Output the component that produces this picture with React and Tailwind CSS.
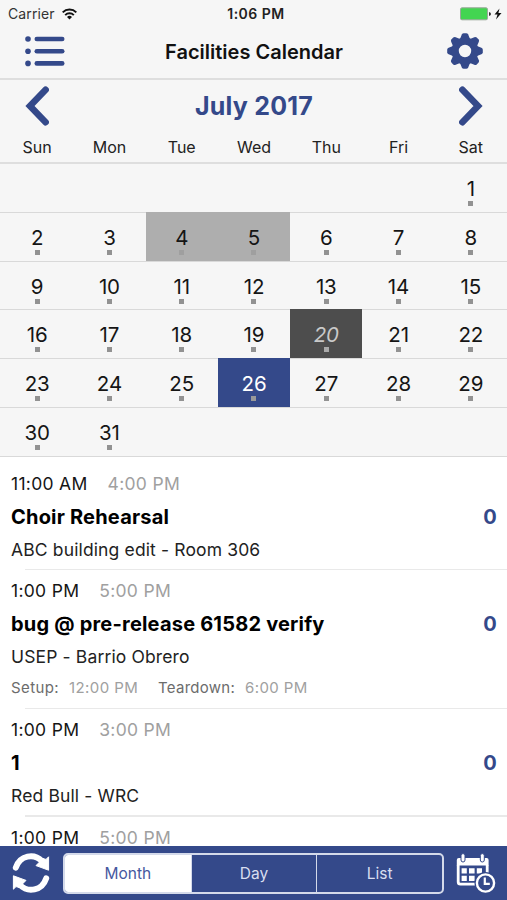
import React, { useState } from "react";

const weekdays = ["Sun", "Mon", "Tue", "Wed", "Thu", "Fri", "Sat"];

const weeks = [
  [null, null, null, null, null, null, 1],
  [2, 3, 4, 5, 6, 7, 8],
  [9, 10, 11, 12, 13, 14, 15],
  [16, 17, 18, 19, 20, 21, 22],
  [23, 24, 25, 26, 27, 28, 29],
  [30, 31, null, null, null, null, null],
];

const events = [
  {
    start: "11:00 AM",
    end: "4:00 PM",
    title: "Choir Rehearsal",
    place: "ABC building edit - Room 306",
    count: 0,
  },
  {
    start: "1:00 PM",
    end: "5:00 PM",
    title: "bug @ pre-release 61582 verify",
    place: "USEP - Barrio Obrero",
    setup: "12:00 PM",
    teardown: "6:00 PM",
    count: 0,
  },
  {
    start: "1:00 PM",
    end: "3:00 PM",
    title: "1",
    place: "Red Bull - WRC",
    count: 0,
  },
  {
    start: "1:00 PM",
    end: "5:00 PM",
  },
];

const StatusBar = () => (
  <div className="grid h-[27px] grid-cols-3 items-center pl-2 pr-[5px]">
    <div className="flex items-center gap-[7px]">
      <span className="text-[14px] tracking-[0.1px] text-[#333]">Carrier</span>
      <svg width="15" height="12" viewBox="0 0 15 12" fill="none" stroke="#111" strokeWidth="2">
        <path d="M0.7 4.4a9.7 9.7 0 0 1 13.6 0" />
        <path d="M3.2 7.1a6.1 6.1 0 0 1 8.6 0" />
        <path d="M7.5 11.5L5 9a3.6 3.6 0 0 1 5 0z" fill="#111" stroke="none" />
      </svg>
    </div>
    <span className="pl-[2px] text-center text-[14px] font-semibold tracking-[0.5px] text-[#222]">1:06 PM</span>
    <div className="flex items-center justify-end">
      <svg width="43" height="14" viewBox="0 0 43 14">
        <rect x="1.5" y="0.8" width="27" height="12" rx="1.5" fill="#43d551" stroke="#9aa79b" />
        <path d="M30 5v4q2-0.5 2-2t-2-2z" fill="#333" />
        <path d="M40.5 1.5L35.5 7.6h3l-1.5 5 5.5-6.6h-3.1z" fill="#111" />
      </svg>
    </div>
  </div>
);

const ListIcon = () => (
  <svg width="40" height="31" viewBox="0 0 40 31" fill="#34498a">
    {[3, 15.2, 27.4].map((y) => (
      <g key={y}>
        <circle cx="3" cy={y} r="2.8" />
        <rect x="9.5" y={y - 2.3} width="30" height="4.6" rx="2.3" />
      </g>
    ))}
  </svg>
);

const GearIcon = () => (
  <svg width="36" height="36" viewBox="-18 -18 36 36" fill="#34498a" className="-mt-[2px]">
    {[0, 45, 90, 135, 180, 225, 270, 315].map((angle) => (
      <path
        key={angle}
        d="M-5 -12L-3.2 -16.4Q-2.6 -17.8 -1.2 -17.8H1.2Q2.6 -17.8 3.2 -16.4L5 -12z"
        transform={`rotate(${angle})`}
      />
    ))}
    <path
      fillRule="evenodd"
      d="M0-13.4a13.4 13.4 0 1 1 0 26.8a13.4 13.4 0 1 1 0-26.8zM0-6.2a6.2 6.2 0 1 0 0 12.4a6.2 6.2 0 1 0 0-12.4z"
    />
  </svg>
);

const Chevron = ({ flip }) => (
  <svg
    width="24"
    height="40"
    viewBox="0 0 24 40"
    fill="none"
    stroke="#34498a"
    strokeWidth="6.6"
    strokeLinecap="round"
    className={flip ? "rotate-180" : ""}
  >
    <path d="M20.6 3.8L5 20L20.6 36.2" strokeLinejoin="miter" />
  </svg>
);

const SyncIcon = () => (
  <svg width="38" height="40" viewBox="0 0 38 40">
    {[0, 180].map((angle) => (
      <g key={angle} transform={`rotate(${angle} 19 20)`}>
        <path
          d="M3.8 14.6C8 2 22 0 30 8"
          fill="none"
          stroke="#fff"
          strokeWidth="6"
          strokeLinecap="round"
        />
        <path
          d="M36.6 3.8V17.2L24 12.6L31 5.6L34 6.4Z"
          fill="#fff"
          stroke="#fff"
          strokeWidth="1"
          strokeLinejoin="round"
        />
      </g>
    ))}
  </svg>
);

const ScheduleIcon = () => (
  <svg width="40" height="40" viewBox="0 0 40 40" fill="none">
    <path d="M2.2 12V29Q2.2 31.2 4.4 31.2H20M31.2 12V20" stroke="#fff" strokeWidth="2.8" />
    <path d="M0.8 12.5V7Q0.8 5 2.8 5H30.6Q32.6 5 32.6 7V12.5z" fill="#fff" />
    {[7, 26.3].map((x) => (
      <rect key={x} x={x - 2} y="0.6" width="4" height="8.4" rx="2" fill="#fff" stroke="#34498a" strokeWidth="1" />
    ))}
    <path d="M5.6 15.3h5.2v5.2H5.6zM13 15.3h5.6v5.2H13zM20.8 15.3H26v5.2h-5.2zM5.6 22.7h5.2v5.2H5.6zM13 22.7h5.6v5.2H13z" fill="#fff" />
    <circle cx="29.5" cy="30" r="11" fill="#34498a" />
    <circle cx="29.5" cy="30" r="8.6" stroke="#fff" strokeWidth="2.4" />
    <path d="M28.8 24.5v6.4h5" stroke="#fff" strokeWidth="2.2" />
  </svg>
);

const DayCell = ({ day, selected, onSelect }) => {
  let look = "text-[#151515]";
  let dot = "bg-[#929292]";
  if (day === 4 || day === 5) {
    look = "bg-[#aeaeae] text-[#151515]";
    dot = "bg-[#9f9f9f]";
  }
  // 20 is today
  if (day === 20) {
    look = "bg-[#4d4d4d] italic text-[#c9c9c9]";
    dot = "bg-[#aaa]";
  }
  if (selected) {
    look = "bg-[#34498a] text-white";
    dot = "bg-[#999]";
  }

  if (!day) return <div />;

  return (
    <button
      className={`-mt-px flex flex-col items-center pt-[12px] ${look}`}
      onClick={() => onSelect(day)}
    >
      <span className="text-[20.5px] leading-[28px] tracking-[-0.1px]">{day}</span>
      <span className={`-mt-[2px] size-[5px] ${dot}`} />
    </button>
  );
};

const EventRow = ({ event }) => (
  <div className="pl-[11px]">
    <div className="flex h-[29px] items-end gap-5 text-[17.5px] leading-[16px] tracking-[0.3px]">
      <span className="text-[#151515]">{event.start}</span>
      <span className="text-[#a0a0a0]">{event.end}</span>
    </div>
    {event.title && (
      <>
        <div className="mt-[13px] flex h-6 items-center justify-between pr-[10px] text-[20px] font-bold tracking-[0.2px]">
          <span className="text-black">{event.title}</span>
          <span className="text-[#34498a]">{event.count}</span>
        </div>
        <p className="mt-[10px] h-[22px] text-[17.5px] leading-[22px] tracking-[0.14px] text-[#222]">
          {event.place}
        </p>
        {event.setup && (
          <div className="mt-[9px] flex h-[22.5px] items-center text-[15px] tracking-[0.4px] text-[#6c6c6c]">
            <span>Setup:</span>
            <span className="ml-[10px] text-[#a0a0a0]">{event.setup}</span>
            <span className="ml-5 tracking-[0.25px]">Teardown:</span>
            <span className="ml-[10px] text-[#a0a0a0]">{event.teardown}</span>
          </div>
        )}
        <div className="ml-[14px] mt-2 h-[1.5px] bg-[#e9e9e9]" />
      </>
    )}
  </div>
);

const App = () => {
  const [selectedDay, setSelectedDay] = useState(26);
  const [view, setView] = useState("Month");

  return (
    <div className="flex h-[900px] w-[507px] flex-col overflow-hidden bg-white font-['Inter',sans-serif] whitespace-nowrap">
      <header className="h-20 shrink-0 border-b-2 border-[#dedede] bg-[#f6f6f6]">
        <StatusBar />
        <div className="flex h-[49px] items-center justify-between pl-[25px] pr-[24px]">
          <ListIcon />
          <h1 className="pr-[4px] pt-px text-[20px] font-semibold text-[#111]">Facilities Calendar</h1>
          <GearIcon />
        </div>
      </header>

      <section className="shrink-0 bg-[#f6f6f6]">
        <div className="flex h-[52px] items-center justify-between pl-[25px] pr-[24px]">
          <button>
            <Chevron />
          </button>
          <h2 className="pt-[2px] text-[25px] font-bold tracking-[0.2px] text-[#34498a]">July 2017</h2>
          <button>
            <Chevron flip />
          </button>
        </div>
        <div className="grid h-[32px] grid-cols-7 border-b-2 border-[#dedede] pl-px text-center text-[16px] leading-[30px] text-[#222]">
          {weekdays.map((name) => (
            <span key={name}>{name}</span>
          ))}
        </div>
        {weeks.map((week, i) => (
          <div key={i} className="grid h-[48.8px] grid-cols-7 border-b border-[#d9d9d9] pl-px">
            {week.map((day, j) => (
              <DayCell key={j} day={day} selected={day === selectedDay} onSelect={setSelectedDay} />
            ))}
          </div>
        ))}
      </section>

      <main className="min-h-0 flex-1 overflow-hidden bg-white pt-[6px]">
        {events.map((event, i) => (
          <EventRow key={i} event={event} />
        ))}
      </main>

      <footer className="flex h-[54px] shrink-0 items-center bg-[#34498a] pl-3 pr-[11px]">
        <SyncIcon />
        <div className="ml-[13px] mr-3 grid h-[41px] flex-1 grid-cols-3 overflow-hidden rounded-[5px] border-2 border-[#d4daea]">
          {["Month", "Day", "List"].map((name, i) => (
            <button
              key={name}
              className={`pt-px text-[15.5px] ${i > 0 ? "border-l border-[#d4daea]" : ""} ${
                view === name ? "bg-white text-[#4658a0]" : "text-[#d8def0]"
              }`}
              onClick={() => setView(name)}
            >
              {name}
            </button>
          ))}
        </div>
        <ScheduleIcon />
      </footer>
    </div>
  );
};

export default App;
